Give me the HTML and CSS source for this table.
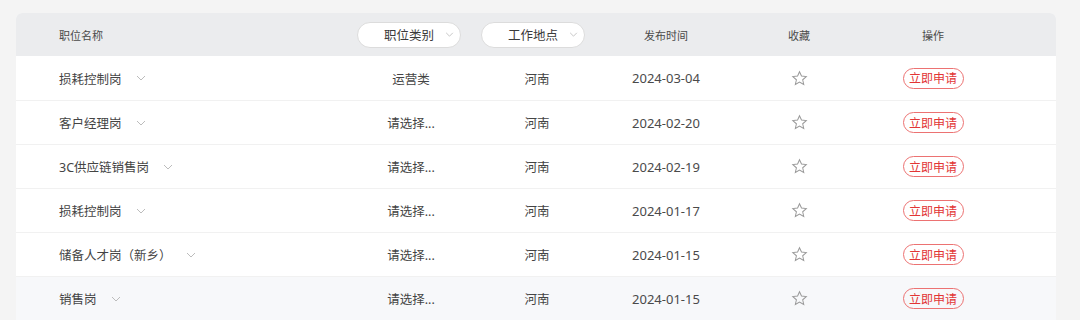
FILE: index.html
```
<!DOCTYPE html>
<html lang="zh">
<head>
<meta charset="utf-8">
<link rel="stylesheet" href="styles.css">
</head>
<body>
<div class="table">
  <div class="row head">
    <div class="c c1 hlabel">职位名称</div>
    <div class="c c2"><div class="pill">职位类别<svg class="chev" viewBox="0 0 10 6"><path d="M1 1l4 4 4-4"/></svg></div></div>
    <div class="c c3"><div class="pill pill2">工作地点<svg class="chev" viewBox="0 0 10 6"><path d="M1 1l4 4 4-4"/></svg></div></div>
    <div class="c c4 hlabel">发布时间</div>
    <div class="c c5 hlabel">收藏</div>
    <div class="c c6 hlabel">操作</div>
  </div>

  <div class="row">
    <div class="c c1 name">损耗控制岗<svg class="chev" viewBox="0 0 10 6"><path d="M1 1l4 4 4-4"/></svg></div>
    <div class="c c2">运营类</div>
    <div class="c c3">河南</div>
    <div class="c c4 date">2024-03-04</div>
    <div class="c c5"><svg class="star" viewBox="0 0 16 16"><path d="M8 1.6l1.9 4.1 4.5.5-3.4 3 1 4.4L8 11.3l-3.9 2.3 1-4.4-3.4-3 4.5-.5z"/></svg></div>
    <div class="c c6"><span class="btn">立即申请</span></div>
  </div>

  <div class="row">
    <div class="c c1 name">客户经理岗<svg class="chev" viewBox="0 0 10 6"><path d="M1 1l4 4 4-4"/></svg></div>
    <div class="c c2">请选择...</div>
    <div class="c c3">河南</div>
    <div class="c c4 date">2024-02-20</div>
    <div class="c c5"><svg class="star" viewBox="0 0 16 16"><path d="M8 1.6l1.9 4.1 4.5.5-3.4 3 1 4.4L8 11.3l-3.9 2.3 1-4.4-3.4-3 4.5-.5z"/></svg></div>
    <div class="c c6"><span class="btn">立即申请</span></div>
  </div>

  <div class="row">
    <div class="c c1 name">3C供应链销售岗<svg class="chev" viewBox="0 0 10 6"><path d="M1 1l4 4 4-4"/></svg></div>
    <div class="c c2">请选择...</div>
    <div class="c c3">河南</div>
    <div class="c c4 date">2024-02-19</div>
    <div class="c c5"><svg class="star" viewBox="0 0 16 16"><path d="M8 1.6l1.9 4.1 4.5.5-3.4 3 1 4.4L8 11.3l-3.9 2.3 1-4.4-3.4-3 4.5-.5z"/></svg></div>
    <div class="c c6"><span class="btn">立即申请</span></div>
  </div>

  <div class="row">
    <div class="c c1 name">损耗控制岗<svg class="chev" viewBox="0 0 10 6"><path d="M1 1l4 4 4-4"/></svg></div>
    <div class="c c2">请选择...</div>
    <div class="c c3">河南</div>
    <div class="c c4 date">2024-01-17</div>
    <div class="c c5"><svg class="star" viewBox="0 0 16 16"><path d="M8 1.6l1.9 4.1 4.5.5-3.4 3 1 4.4L8 11.3l-3.9 2.3 1-4.4-3.4-3 4.5-.5z"/></svg></div>
    <div class="c c6"><span class="btn">立即申请</span></div>
  </div>

  <div class="row">
    <div class="c c1 name">储备人才岗（新乡）<svg class="chev" viewBox="0 0 10 6"><path d="M1 1l4 4 4-4"/></svg></div>
    <div class="c c2">请选择...</div>
    <div class="c c3">河南</div>
    <div class="c c4 date">2024-01-15</div>
    <div class="c c5"><svg class="star" viewBox="0 0 16 16"><path d="M8 1.6l1.9 4.1 4.5.5-3.4 3 1 4.4L8 11.3l-3.9 2.3 1-4.4-3.4-3 4.5-.5z"/></svg></div>
    <div class="c c6"><span class="btn">立即申请</span></div>
  </div>

  <div class="row hover">
    <div class="c c1 name">销售岗<svg class="chev" viewBox="0 0 10 6"><path d="M1 1l4 4 4-4"/></svg></div>
    <div class="c c2">请选择...</div>
    <div class="c c3">河南</div>
    <div class="c c4 date">2024-01-15</div>
    <div class="c c5"><svg class="star" viewBox="0 0 16 16"><path d="M8 1.6l1.9 4.1 4.5.5-3.4 3 1 4.4L8 11.3l-3.9 2.3 1-4.4-3.4-3 4.5-.5z"/></svg></div>
    <div class="c c6"><span class="btn">立即申请</span></div>
  </div>
</div>
</body>
</html>
```
FILE: styles.css
```
html, body {
  margin: 0;
  padding: 0;
  background: #f4f4f4;
}
body {
  padding: 13px 24px 0 16px;
  font-family: "Noto Sans", "Noto Sans CJK SC", sans-serif;
  color: #444;
  font-size: 12.5px;
  height: 320px;
  box-sizing: border-box;
  overflow: hidden;
}
.table {
  width: 1040px;
  background: #fff;
  border-radius: 6px 6px 0 0;
  overflow: hidden;
}
.row {
  display: grid;
  grid-template-columns: 341px 108px 144px 114px 152px 116px 65px;
  height: 44px;
  align-items: center;
  border-top: 1px solid #f1f1f1;
  box-sizing: border-box;
}
.row.head {
  height: 43px;
  background: #ebecee;
  border-top: none;
}
.row.head + .row {
  border-top: none;
}
.row.hover {
  background: #f7f8fa;
}
.c {
  display: flex;
  align-items: center;
  justify-content: center;
  white-space: nowrap;
}
.c1 {
  justify-content: flex-start;
  padding-left: 43px;
}
.hlabel {
  font-size: 11px;
  color: #4a4a4a;
}
.head .c2, .head .c3 {
  justify-content: flex-start;
}
.pill {
  width: 104px;
  height: 26px;
  box-sizing: border-box;
  border: 1px solid #dcdcdc;
  border-radius: 13px;
  background: #fff;
  display: flex;
  align-items: center;
  padding-left: 26px;
  font-size: 12.5px;
  color: #3a3a3a;
}
.pill2 {
  margin-left: 16px;
}
.pill .chev {
  margin-left: 11px;
  width: 9px;
  height: 5px;
}
.chev {
  width: 10px;
  height: 6px;
  fill: none;
  stroke: #bcbcbc;
  stroke-width: 1;
}
.name .chev {
  margin-left: 14px;
}
.date {
  color: #4a4a4a;
  font-size: 13px;
}
.star {
  width: 17px;
  height: 17px;
  fill: none;
  stroke: #9a9a9a;
  stroke-width: 0.95;
  stroke-linejoin: miter;
}
.btn {
  display: inline-flex;
  align-items: center;
  justify-content: center;
  width: 61px;
  height: 21px;
  box-sizing: border-box;
  border: 1px solid #ec7272;
  border-radius: 11px;
  color: #e23535;
  font-size: 12px;
}
```
